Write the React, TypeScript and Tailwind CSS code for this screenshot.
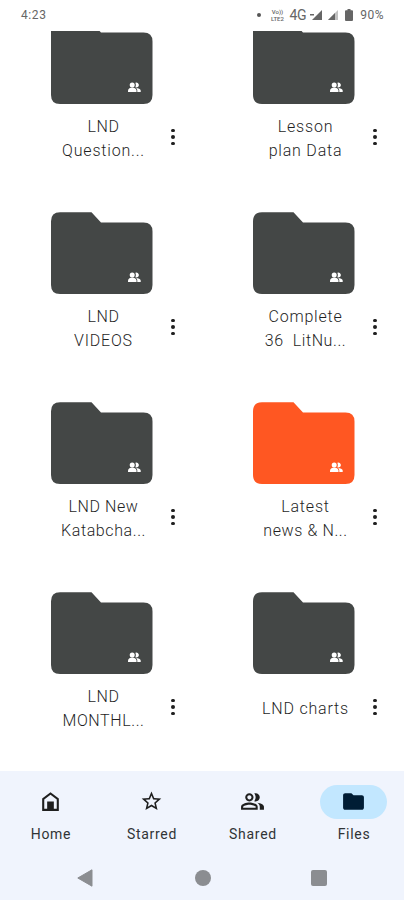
import type { ReactNode } from 'react'

type Folder = {
  lines: { text: string; className: string }[]
  color: string
}

const DARK = 'text-[#444746]'

const folders: Folder[] = [
  {
    lines: [
      { text: 'LND', className: 'tracking-[0.5px]' },
      { text: 'Question...', className: 'tracking-[0.800px]' },
    ],
    color: DARK,
  },
  {
    lines: [
      { text: 'Lesson', className: 'tracking-[0.800px]' },
      { text: 'plan Data', className: 'tracking-[0.800px]' },
    ],
    color: DARK,
  },
  {
    lines: [
      { text: 'LND', className: 'tracking-[0.5px]' },
      { text: 'VIDEOS', className: 'tracking-[0.800px]' },
    ],
    color: DARK,
  },
  {
    lines: [
      { text: 'Complete', className: 'tracking-[0.800px]' },
      { text: '36  LitNu...', className: 'tracking-[0.6px]' },
    ],
    color: DARK,
  },
  {
    lines: [
      { text: 'LND New', className: 'tracking-[0.6px]' },
      { text: 'Katabcha...', className: 'tracking-[0.6px]' },
    ],
    color: DARK,
  },
  {
    lines: [
      { text: 'Latest', className: 'tracking-[0.800px]' },
      { text: 'news & N...', className: 'tracking-[0.6px]' },
    ],
    color: 'text-[#ff5722]',
  },
  {
    lines: [
      { text: 'LND', className: 'tracking-[0.5px]' },
      { text: 'MONTHL...', className: 'tracking-[0.6px]' },
    ],
    color: DARK,
  },
  {
    lines: [{ text: 'LND charts', className: 'tracking-[0.800px]' }],
    color: DARK,
  },
]

function StatusBar() {
  return (
    <header className="flex h-[31px] shrink-0 justify-between bg-white pt-[7px] pr-5 pl-[21px] text-[#666]">
      <span className="text-[12px] leading-4 tracking-[0.6px]">4:23</span>
      <div className="flex h-4 items-center">
        <span className="mr-2 size-1 rounded-full bg-[#555]" />
        <span className="mr-1 flex w-4 flex-col items-center text-[6px] leading-[8px] font-medium">
          <span className="h-[7px]">Vo))</span>
          <span className="h-[7px]">LTE2</span>
        </span>
        <span className="mr-1 text-[14px] leading-4 tracking-[-0.3px]">4G</span>
        <svg className="mr-[6px] h-[10px] w-[12px]" viewBox="0 0 12 10" fill="currentColor">
          <path d="M12 0v10H2z" />
          <path d="M0 4h4v1.5H0z" />
        </svg>
        <svg className="mr-[7px] h-[10px] w-[10px]" viewBox="0 0 10 10" fill="currentColor">
          <path d="M10 0v10H0z" opacity="0.4" />
          <path d="M7 3v7H0z" />
        </svg>
        <svg className="mr-[7px] h-3 w-2" viewBox="0 0 8 12" fill="currentColor">
          <path d="M2.5 0h3v1.2H7q1 0 1 1V11q0 1-1 1H1q-1 0-1-1V2.2q0-1 1-1h1.5z" />
        </svg>
        <span className="text-[12px] leading-4 tracking-[0.5px]">90%</span>
      </div>
    </header>
  )
}

function FolderIcon({ color }: { color: string }) {
  return (
    <svg className={`ml-[51px] h-[82px] w-[102px] ${color}`} viewBox="0 0 102 82">
      <path
        fill="currentColor"
        d="M9 .3h31.500L50 10.500H92.500q9 0 9 9V73q0 9-9 9H9q-9 0-9-9V9.300q0-9 9-9z"
      />
      <g fill="#fff">
        <circle cx="81.200" cy="63" r="2.500" />
        <path d="M77 70v-1.500c0-1.900 2.500-2.900 4.200-2.900s4.300 1 4.300 2.900V70z" />
        <path d="M84.400 60.700a2.500 2.500 0 1 1 0 4.600q1.100-2.300 0-4.600z" />
        <path d="M86.300 70v-1.500q0-1.400-1.100-2.500c1.900.1 4.500.8 4.500 2.500V70z" />
      </g>
    </svg>
  )
}

function FolderCell({ folder }: { folder: Folder }) {
  return (
    <div className="h-[190px]">
      <FolderIcon color={folder.color} />
      <div className="mt-[10px] flex h-12 items-center">
        <div className="ml-[50px] w-[107px] pt-px text-center text-base leading-6 font-light text-[#1f1f1f]">
          {folder.lines.map((line) => (
            <p key={line.text} className={`whitespace-pre ${line.className}`}>
              {line.text}
            </p>
          ))}
        </div>
        <button aria-label="More options" className="ml-[14px] flex flex-col gap-[3px] pb-[2px]">
          <span className="size-[3.500px] rounded-full bg-[#1f1f1f]" />
          <span className="size-[3.500px] rounded-full bg-[#1f1f1f]" />
          <span className="size-[3.500px] rounded-full bg-[#1f1f1f]" />
        </button>
      </div>
    </div>
  )
}

function NavItem({ label, active, children }: { label: string; active?: boolean; children: ReactNode }) {
  return (
    <button className="flex flex-1 flex-col items-center">
      <span
        className={`flex h-[34px] w-[67px] items-center justify-center rounded-full pb-px ${active ? 'bg-[#c2e7ff] text-[#001d35]' : 'text-[#1f1f1f]'}`}
      >
        <svg className="size-[25px]" viewBox="0 0 24 24" fill="currentColor">
          {children}
        </svg>
      </span>
      <span className="mt-[5px] pl-px text-[14px] leading-5 tracking-[0.7px] text-[#303335]">{label}</span>
    </button>
  )
}

function BottomNav() {
  return (
    <nav className="flex h-[87px] shrink-0 pt-[14px]">
      <NavItem label="Home">
        <path d="M4 21V9l8-6 8 6v12zm2-2h2.800v-7h6.400v7H18v-9l-6-4.500L6 10z" />
      </NavItem>
      <NavItem label="Starred">
        <path
          transform="translate(.7 .5) scale(.94)"
          d="m22 9.240-7.190-.62L12 2 9.190 8.630 2 9.240l5.460 4.730L5.820 21 12 17.270 18.180 21l-1.630-7.030zM12 15.400l-3.760 2.270 1-4.280-3.320-2.880 4.380-.38L12 6.100l1.710 4.040 4.380.38-3.320 2.880 1 4.280z"
        />
      </NavItem>
      <NavItem label="Shared">
        <path d="M9 12c2.210 0 4-1.790 4-4s-1.790-4-4-4-4 1.790-4 4 1.790 4 4 4zm0-6c1.100 0 2 .9 2 2s-.9 2-2 2-2-.9-2-2 .9-2 2-2zM9 13c-2.670 0-8 1.340-8 4v3h16v-3c0-2.660-5.330-4-8-4zm6 5H3v-.990C3.200 16.290 6.300 15 9 15s5.800 1.290 6 2zM15 12c2.210 0 4-1.790 4-4s-1.790-4-4-4c-.47 0-.91.1-1.330.24C14.500 5.270 15 6.580 15 8s-.5 2.730-1.330 3.760c.42.14.86.24 1.330.24zM16.670 13.130C18.040 14.060 19 15.320 19 17v3h4v-3c0-2.180-3.580-3.470-6.330-3.870z" />
      </NavItem>
      <NavItem label="Files" active>
        <path d="M10 4H4c-1.100 0-1.990.9-1.990 2L2 18c0 1.100.9 2 2 2h16c1.100 0 2-.9 2-2V8c0-1.100-.9-2-2-2h-8z" />
      </NavItem>
    </nav>
  )
}

function SystemNav() {
  return (
    <div className="flex flex-1 justify-between pt-[11px] pr-[77px] pl-[77px] text-[#8b8d91]">
      <svg className="h-[18px] w-4" viewBox="0 0 16 18" fill="currentColor">
        <path d="M15 .8v16.400L.8 9z" stroke="currentColor" strokeLinejoin="round" />
      </svg>
      <span className="mt-px ml-px size-4 rounded-full bg-current" />
      <span className="mt-px size-4 rounded-[2px] bg-current" />
    </div>
  )
}

export default function App() {
  return (
    <div className="flex h-[900px] w-[404px] flex-col overflow-hidden bg-white font-[Roboto,sans-serif]">
      <StatusBar />
      <main className="h-[740px] shrink-0 overflow-hidden">
        <div className="-mt-[9px] grid grid-cols-2">
          {folders.map((folder, i) => (
            <FolderCell key={i} folder={folder} />
          ))}
        </div>
      </main>
      <footer className="flex flex-1 flex-col bg-[#f0f4fd]">
        <BottomNav />
        <SystemNav />
      </footer>
    </div>
  )
}
